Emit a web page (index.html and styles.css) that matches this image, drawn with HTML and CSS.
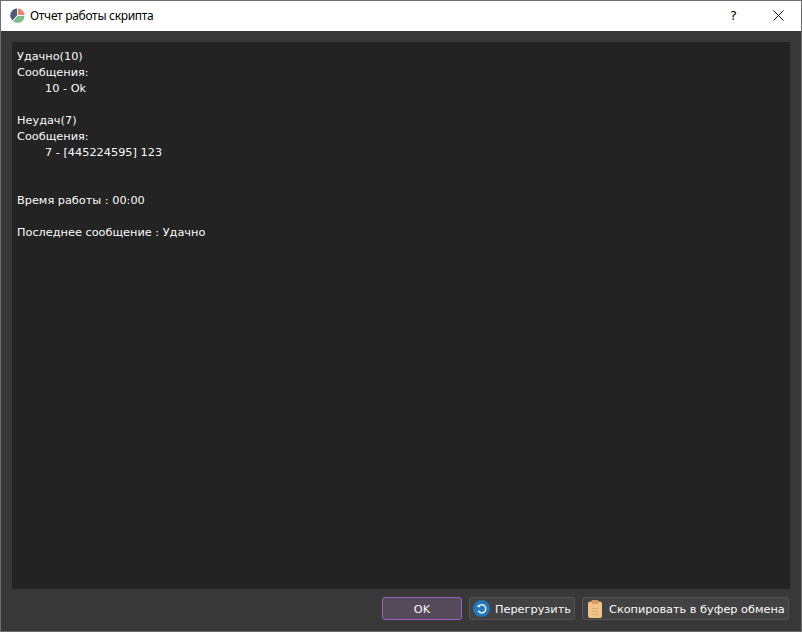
FILE: index.html
```html
<!DOCTYPE html>
<html lang="ru">
<head>
<meta charset="utf-8">
<title>Отчет работы скрипта</title>
<link rel="stylesheet" href="styles.css">
</head>
<body>
<div class="window">
  <header class="titlebar">
    <svg class="app-icon" width="15" height="15" viewBox="0 0 16 16">
      <path d="M8.6 7.4 L8.6 0.5 A7.4 7.4 0 0 1 15.5 7.4 Z" fill="#e8836b"/>
      <path d="M8 8.4 L15.4 8.4 A7.4 7.4 0 0 1 3.2 14 Z" fill="#7dbd8c"/>
      <path d="M7.6 7.8 L2.6 13.2 A7.4 7.4 0 0 1 7.6 0.5 Z" fill="#4f5a78"/>
    </svg>
    <span class="title">Отчет работы скрипта</span>
    <span class="help">?</span>
    <svg class="close" width="11" height="11" viewBox="0 0 11 11">
      <path d="M0.5 0.5 L10.5 10.5 M10.5 0.5 L0.5 10.5" stroke="#111" stroke-width="1" fill="none"/>
    </svg>
  </header>
  <main class="content">
    <section class="report">
      <div class="line">Удачно(10)</div>
      <div class="line">Сообщения:</div>
      <div class="line indent">10 - Ok</div>
      <div class="line blank"></div>
      <div class="line">Неудач(7)</div>
      <div class="line">Сообщения:</div>
      <div class="line indent">7 - [445224595] 123</div>
      <div class="line blank"></div>
      <div class="line blank"></div>
      <div class="line">Время работы : 00:00</div>
      <div class="line blank"></div>
      <div class="line">Последнее сообщение : Удачно</div>
    </section>
    <footer class="actions">
      <button class="btn btn-ok"><span class="btn-label">OK</span></button>
      <button class="btn btn-reload">
        <svg width="17" height="17" viewBox="0 0 17 17">
          <circle cx="8.5" cy="8.5" r="8.5" fill="#2277bb"/>
          <path d="M5.6 6.4 A4 4 0 1 1 5.2 10.6" stroke="#e8f1f8" stroke-width="1.5" fill="none"/>
          <path d="M3.6 6.6 L7.4 7.6 L6.4 4.4 Z" fill="#e8f1f8"/>
        </svg>
        <span class="btn-label">Перегрузить</span>
      </button>
      <button class="btn btn-copy">
        <svg width="14" height="18" viewBox="0 0 14 18">
          <rect x="0" y="1.5" width="14" height="16.5" rx="2.5" fill="#efc58c"/>
          <rect x="3.5" y="0" width="7" height="4" rx="1" fill="#dd9a66"/>
          <path d="M4 8.5 H10 M4 11.5 H10 M4 14.5 H10" stroke="#dfa873" stroke-width="1"/>
        </svg>
        <span class="btn-label">Скопировать в буфер обмена</span>
      </button>
    </footer>
  </main>
</div>
</body>
</html>
```

FILE: styles.css
```css
* { box-sizing: border-box; }
html, body { margin: 0; padding: 0; }
body { width: 802px; height: 632px; overflow: hidden; background: #2a2a2a; }
.window {
  width: 802px;
  height: 632px;
  border: 1px solid #6e6e6e;
  display: flex;
  flex-direction: column;
  font-family: "DejaVu Sans", sans-serif;
  font-size: 11.3px;
}
.titlebar {
  height: 30px;
  flex: none;
  background: #fff;
  display: flex;
  align-items: center;
  padding-left: 9px;
  padding-bottom: 1px;
  color: #000;
}
.app-icon { flex: none; }
.title {
  margin-left: 5px;
  flex: 1;
  font-family: "Noto Sans", sans-serif;
  font-size: 12px;
  letter-spacing: -0.3px;
}
.help { font-size: 13px; margin-right: 36px; }
.close { margin-right: 17px; }
.content {
  flex: 1;
  background: #383838;
  padding: 11px;
  display: flex;
  flex-direction: column;
  min-height: 0;
}
.report {
  flex: 1;
  background: #232323;
  padding: 7px 5px 5px;
  color: #fafafa;
  line-height: 16px;
}
.line { height: 16px; white-space: pre; }
.indent { padding-left: 28px; }
.actions {
  flex: none;
  display: flex;
  justify-content: flex-end;
  gap: 7px;
  margin-top: 8px;
  margin-right: 1px;
}
.btn {
  height: 23px;
  padding: 0;
  background: #424242;
  border: 1px solid #555;
  border-radius: 3px;
  color: #fafafa;
  font: inherit;
  display: flex;
  align-items: center;
}
.btn-label { padding-top: 1px; }
.btn-ok {
  width: 80px;
  justify-content: center;
  background: #554a5a;
  border-color: #9a5fc0;
}
.btn-reload { width: 106px; gap: 5px; padding-left: 3px; }
.btn-copy { width: 207px; gap: 7px; padding-left: 5px; }
```
